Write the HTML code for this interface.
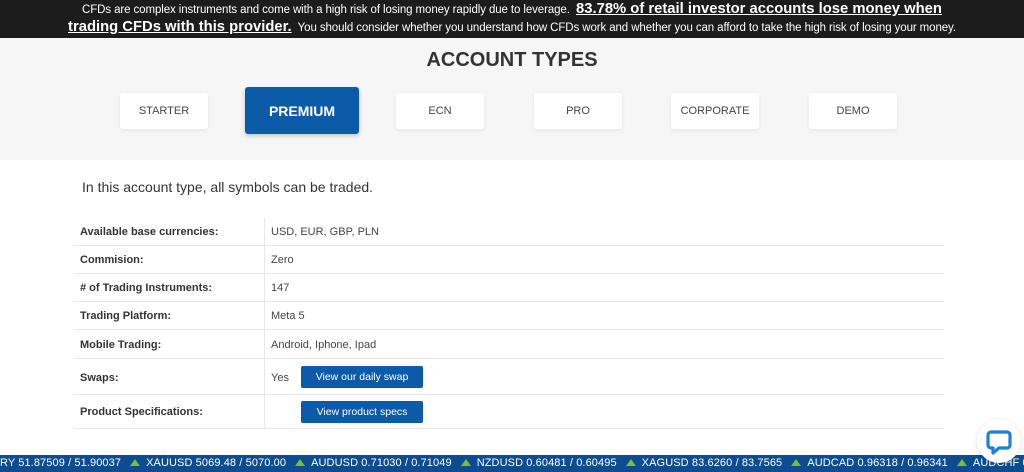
<!DOCTYPE html>
<html><head><meta charset="utf-8"><style>
*{margin:0;padding:0;box-sizing:border-box}
body{width:1024px;height:472px;overflow:hidden;background:#fff;font-family:"Liberation Sans",sans-serif;position:relative;color:#333}
.top{position:absolute;left:0;top:0;width:1024px;height:38px;background:#1c1c1c;color:#fff;text-align:center;font-size:11.5px;line-height:17px;padding-top:1px;letter-spacing:-0.1px;white-space:nowrap}
.top b{font-size:14.8px;text-decoration:underline;letter-spacing:0}
.gray{position:absolute;left:0;top:38px;width:1024px;height:122px;background:#f6f6f6}
h1{position:absolute;top:49px;left:0;width:1024px;text-align:center;font-size:20px;color:#333;font-weight:bold}
.tab{position:absolute;background:#fff;border-radius:3px;box-shadow:0 1px 4px rgba(0,0,0,.08);font-size:11px;color:#444;display:flex;align-items:center;justify-content:center;top:93px;height:36px;width:88px}
.tab.a{background:#0b5ba8;color:#fff;font-size:14px;font-weight:bold;top:87px;height:47px;width:114px;box-shadow:0 2px 5px rgba(0,0,0,.2)}
.intro{position:absolute;left:82px;top:179px;font-size:14px;color:#333}
.row{position:absolute;left:74px;width:870px;border-bottom:1px solid #e8e8e8;font-size:11px}
.row .l{position:absolute;left:6px;font-weight:bold;color:#333}
.row .v{position:absolute;left:197px;color:#444}
.row .d{position:absolute;left:190px;top:0;bottom:0;border-left:1px solid #e8e8e8}
.btn{position:absolute;background:#0b5ba8;color:#fff;font-size:10.5px;border-radius:2px;width:122px;height:22px;display:flex;align-items:center;justify-content:center}
.tick{position:absolute;left:0;top:455px;width:1024px;height:17px;background:#0c4d92;color:#fff;font-size:11px;line-height:17px;white-space:nowrap;overflow:hidden;letter-spacing:0.1px}
.tick i{display:inline-block;width:0;height:0;border-left:5px solid transparent;border-right:5px solid transparent;border-bottom:7px solid #7dbb2f;margin:0 6px 0 9px}
.chat{position:absolute;left:977px;top:419px;width:44px;height:44px;border-radius:50%;background:#fff;box-shadow:0 1px 5px rgba(0,0,0,.15)}
</style></head><body>
<div class="top">CFDs are complex instruments and come with a high risk of losing money rapidly due to leverage. &nbsp;<b>83.78% of retail investor accounts lose money when</b><br><b>trading CFDs with this provider.</b>&nbsp; You should consider whether you understand how CFDs work and whether you can afford to take the high risk of losing your money.</div>
<div class="gray"></div>
<h1>ACCOUNT TYPES</h1>
<div class="tab" style="left:120px">STARTER</div>
<div class="tab a" style="left:245px">PREMIUM</div>
<div class="tab" style="left:396px">ECN</div>
<div class="tab" style="left:534px">PRO</div>
<div class="tab" style="left:671px">CORPORATE</div>
<div class="tab" style="left:809px">DEMO</div>
<div class="intro">In this account type, all symbols can be traded.</div>
<div class="row" style="top:218px;height:28px"><div class="d"></div><span class="l" style="top:8px">Available base currencies:</span><span class="v" style="top:8px">USD, EUR, GBP, PLN</span></div>
<div class="row" style="top:246px;height:28px"><div class="d"></div><span class="l" style="top:8px">Commision:</span><span class="v" style="top:8px">Zero</span></div>
<div class="row" style="top:274px;height:28px"><div class="d"></div><span class="l" style="top:8px">&#35; of Trading Instruments:</span><span class="v" style="top:8px">147</span></div>
<div class="row" style="top:302px;height:28px"><div class="d"></div><span class="l" style="top:8px">Trading Platform:</span><span class="v" style="top:8px">Meta 5</span></div>
<div class="row" style="top:330px;height:29px"><div class="d"></div><span class="l" style="top:9px">Mobile Trading:</span><span class="v" style="top:9px">Android, Iphone, Ipad</span></div>
<div class="row" style="top:359px;height:36px"><div class="d"></div><span class="l" style="top:13px">Swaps:</span><span class="v" style="top:13px">Yes</span><div class="btn" style="left:227px;top:7px">View our daily swap</div></div>
<div class="row" style="top:395px;height:34px"><div class="d"></div><span class="l" style="top:11px">Product Specifications:</span><div class="btn" style="left:227px;top:6px">View product specs</div></div>
<div class="tick">RY 51.87509 / 51.90037<i></i>XAUUSD 5069.48 / 5070.00<i></i>AUDUSD 0.71030 / 0.71049<i></i>NZDUSD 0.60481 / 0.60495<i></i>XAGUSD 83.6260 / 83.7565<i></i>AUDCAD 0.96318 / 0.96341<i></i>AUDCHF 0.</div>
<div class="chat"><svg width="44" height="44" viewBox="0 0 44 44"><path d="M14 13h16a3 3 0 0 1 3 3v10a3 3 0 0 1-3 3h-8l-6 5v-5h-2a3 3 0 0 1-3-3V16a3 3 0 0 1 3-3z" fill="none" stroke="#1e7fd6" stroke-width="3.2" stroke-linejoin="round"/></svg></div>
</body></html>
